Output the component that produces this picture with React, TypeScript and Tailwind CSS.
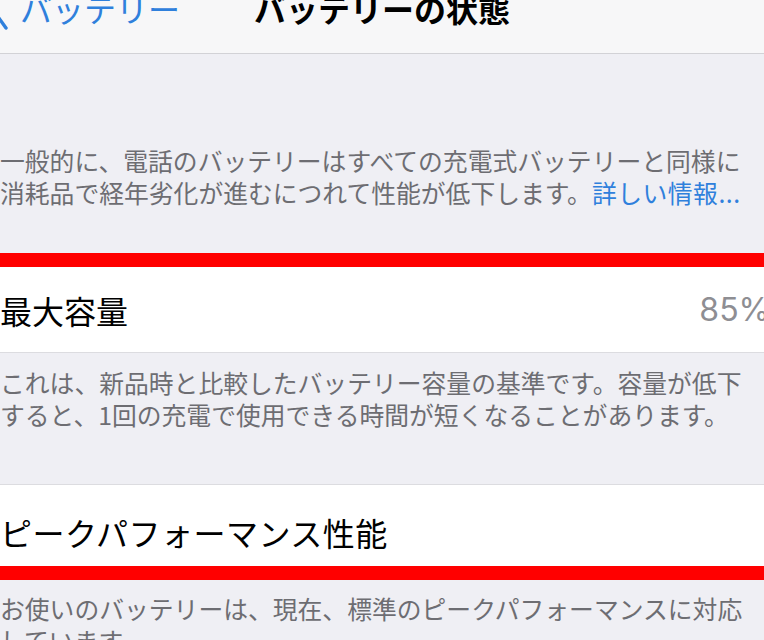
import React from "react";

const App: React.FC = () => {
  return (
    <div className="w-[764px] h-[640px] overflow-hidden bg-[#efeff4] font-['Noto_Sans_CJK_JP',sans-serif] text-black">
      {/* nav bar */}
      <header className="grid h-[54px] grid-cols-[1fr_auto_1fr] items-start border-b border-[#d2d2d6] bg-[#f7f7f8]">
        <div className="flex items-start">
          <svg width="20" height="40" viewBox="0 0 20 40" className="shrink-0">
            <path d="M-4 14 L6 28" stroke="#2f80dc" strokeWidth="3.4" strokeLinecap="round" fill="none" />
          </svg>
          <span className="-mt-[8px] text-[32px] leading-8 text-[#2f80dc]">バッテリー</span>
        </div>
        <h1 className="-mt-[8px] text-[32px] font-bold leading-8">バッテリーの状態</h1>
        <div />
      </header>

      <p className="whitespace-nowrap pt-[90px] pb-[45px] text-[24.8px] leading-8 text-[#6d6d72]">
        一般的に、電話のバッテリーはすべての充電式バッテリーと同様に
        <br />
        消耗品で経年劣化が進むにつれて性能が低下します。
        <span className="tracking-[0.5px] text-[#2f80dc]">詳しい情報...</span>
      </p>

      <div className="h-[14px] bg-[#ff0000]" />

      <div className="flex h-[86px] items-center justify-between border-b border-[#dcdce0] bg-white">
        <span className="text-[32px] leading-8">最大容量</span>
        <span className="-mr-[6px] font-['Inter',sans-serif] text-[32px] leading-8 text-[#8e8e93]">85%</span>
      </div>

      <p className="whitespace-nowrap pt-[13px] pb-[54px] text-[24.8px] leading-8 text-[#6d6d72]">
        これは、新品時と比較したバッテリー容量の基準です。容量が低下
        <br />
        すると、1回の充電で使用できる時間が短くなることがあります。
      </p>

      <div className="h-[82px] border-t border-[#dcdce0] bg-white pt-[31px]">
        <span className="text-[32px] leading-8 tracking-[0.5px]">ピークパフォーマンス性能</span>
      </div>

      <div className="h-[14px] bg-[#ff0000]" />

      <p className="whitespace-nowrap pt-[12px] text-[24.8px] leading-8 text-[#6d6d72]">
        お使いのバッテリーは、現在、標準のピークパフォーマンスに対応
        <br />
        しています。
      </p>
    </div>
  );
};

export default App;
